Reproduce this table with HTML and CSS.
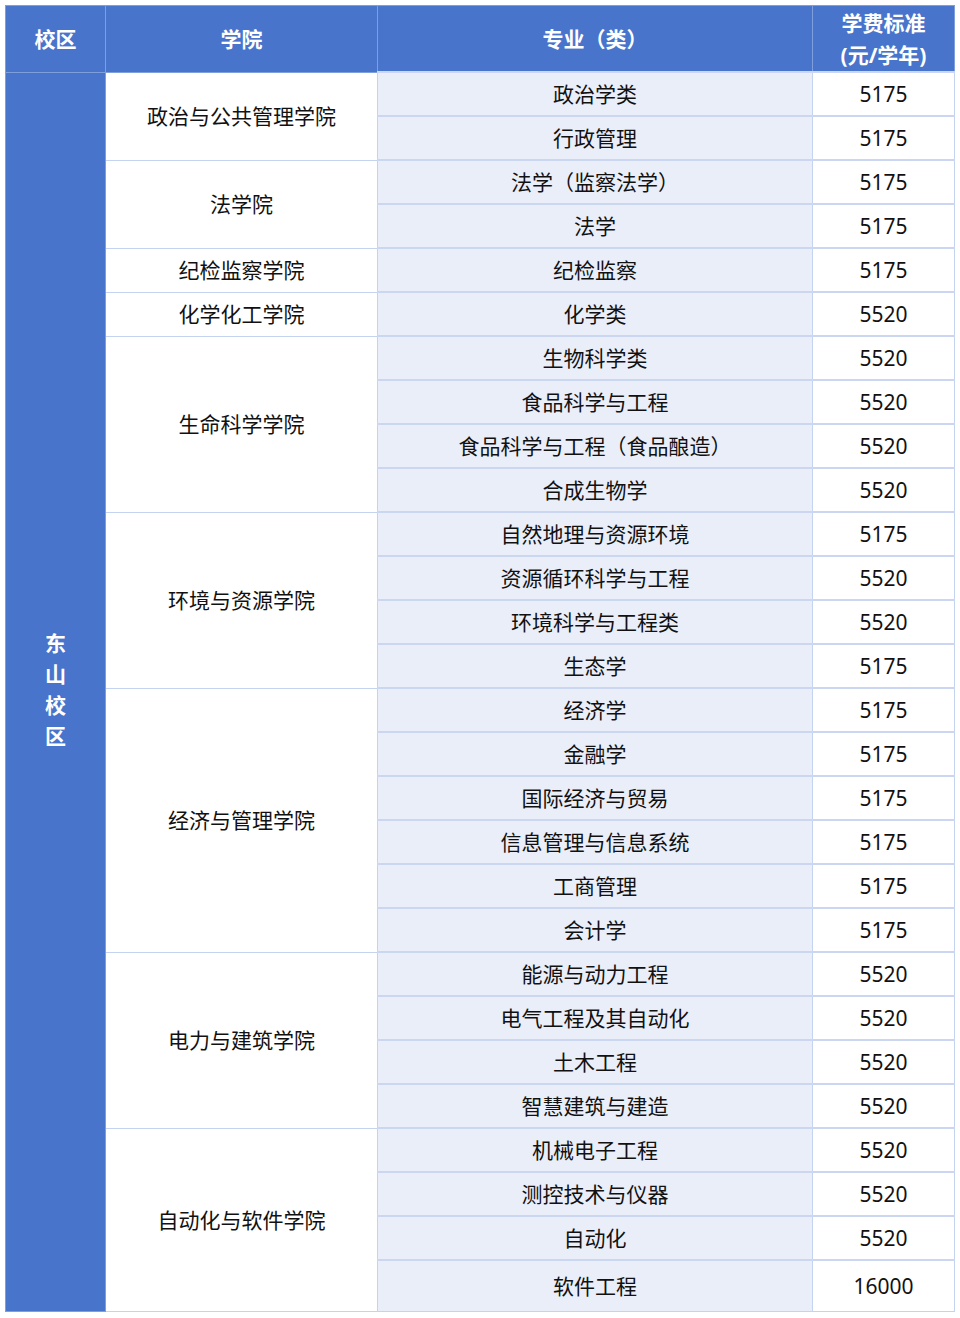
FILE: index.html
```html
<!DOCTYPE html>
<html lang="zh-CN">
<head>
<meta charset="utf-8">
<link rel="stylesheet" href="styles.css">
</head>
<body>
<table class="fees">
<colgroup>
<col class="c-campus"><col class="c-college"><col class="c-major"><col class="c-fee">
</colgroup>
<thead>
<tr><th>校区</th><th>学院</th><th>专业（类）</th><th>学费标准<br>(元/学年)</th></tr>
</thead>
<tbody>
<tr><td class="campus" rowspan="28"><div class="vert">东<br>山<br>校<br>区</div></td><td class="college" rowspan="2">政治与公共管理学院</td><td class="major">政治学类</td><td class="fee">5175</td></tr>
<tr><td class="major">行政管理</td><td class="fee">5175</td></tr>
<tr><td class="college" rowspan="2">法学院</td><td class="major">法学（监察法学）</td><td class="fee">5175</td></tr>
<tr><td class="major">法学</td><td class="fee">5175</td></tr>
<tr><td class="college">纪检监察学院</td><td class="major">纪检监察</td><td class="fee">5175</td></tr>
<tr><td class="college">化学化工学院</td><td class="major">化学类</td><td class="fee">5520</td></tr>
<tr><td class="college" rowspan="4">生命科学学院</td><td class="major">生物科学类</td><td class="fee">5520</td></tr>
<tr><td class="major">食品科学与工程</td><td class="fee">5520</td></tr>
<tr><td class="major">食品科学与工程（食品酿造）</td><td class="fee">5520</td></tr>
<tr><td class="major">合成生物学</td><td class="fee">5520</td></tr>
<tr><td class="college" rowspan="4">环境与资源学院</td><td class="major">自然地理与资源环境</td><td class="fee">5175</td></tr>
<tr><td class="major">资源循环科学与工程</td><td class="fee">5520</td></tr>
<tr><td class="major">环境科学与工程类</td><td class="fee">5520</td></tr>
<tr><td class="major">生态学</td><td class="fee">5175</td></tr>
<tr><td class="college" rowspan="6">经济与管理学院</td><td class="major">经济学</td><td class="fee">5175</td></tr>
<tr><td class="major">金融学</td><td class="fee">5175</td></tr>
<tr><td class="major">国际经济与贸易</td><td class="fee">5175</td></tr>
<tr><td class="major">信息管理与信息系统</td><td class="fee">5175</td></tr>
<tr><td class="major">工商管理</td><td class="fee">5175</td></tr>
<tr><td class="major">会计学</td><td class="fee">5175</td></tr>
<tr><td class="college" rowspan="4">电力与建筑学院</td><td class="major">能源与动力工程</td><td class="fee">5520</td></tr>
<tr><td class="major">电气工程及其自动化</td><td class="fee">5520</td></tr>
<tr><td class="major">土木工程</td><td class="fee">5520</td></tr>
<tr><td class="major">智慧建筑与建造</td><td class="fee">5520</td></tr>
<tr><td class="college" rowspan="4">自动化与软件学院</td><td class="major">机械电子工程</td><td class="fee">5520</td></tr>
<tr><td class="major">测控技术与仪器</td><td class="fee">5520</td></tr>
<tr><td class="major">自动化</td><td class="fee">5520</td></tr>
<tr class="last"><td class="major">软件工程</td><td class="fee">16000</td></tr>
</tbody>
</table>
</body>
</html>
```
FILE: styles.css
```css
html, body {
  margin: 0;
  padding: 0;
  background: #ffffff;
}
body {
  padding: 5px 0 0 5px;
  font-family: "Noto Sans", "Noto Sans CJK SC", sans-serif;
  color: #111111;
}
.fees {
  border-collapse: collapse;
  table-layout: fixed;
  width: 949px;
  font-size: 21px;
}
.c-campus { width: 100px; }
.c-college { width: 272px; }
.c-major { width: 435px; }
.c-fee { width: 142px; }
.fees th, .fees td {
  border: 1px solid #c4d3ef;
  padding: 0;
  text-align: center;
  vertical-align: middle;
}
.fees th {
  background: #4874cb;
  color: #ffffff;
  font-weight: bold;
  height: 65px;
  line-height: 32px;
  border-color: #7f9fdc;
}
.fees td {
  height: 42px;
  line-height: 28px;
}
.fees tr.last td {
  height: 50px;
}
.fees td.campus {
  background: #4874cb;
  color: #ffffff;
  font-weight: bold;
  border-color: #7f9fdc;
}
.vert {
  line-height: 31px;
  padding-bottom: 4px;
}
.fees td.major {
  background: #eaeef9;
  border-top: 2px solid #cbd7f1;
}
.fees td.college, .fees td.fee {
  background: #ffffff;
}
.fees td.fee {
  border-top: 2px solid #cbd7f1;
}
```
